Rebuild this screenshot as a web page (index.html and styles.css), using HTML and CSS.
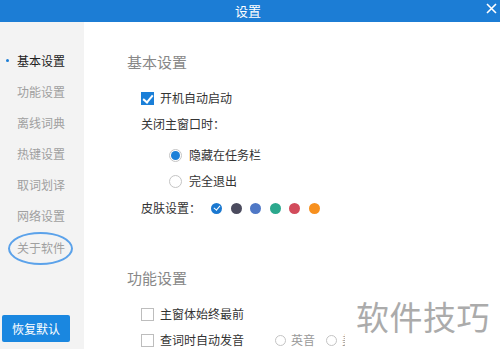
FILE: index.html
```html
<!DOCTYPE html>
<html lang="zh-CN">
<head>
    <meta charset="UTF-8">
    <title>设置</title>
    <link rel="stylesheet" href="styles.css">
</head>
<body>
    <header class="titlebar">
        <span class="title">设置</span>
        <svg class="close" width="11" height="11" viewBox="0 0 11 11">
            <path d="M1 1 L10 10 M10 1 L1 10" stroke="#fff" stroke-width="1.6" fill="none"/>
        </svg>
    </header>

    <div class="main">
        <!-- Left navigation -->
        <aside class="sidebar">
            <ul class="nav">
                <li class="active">基本设置</li>
                <li>功能设置</li>
                <li>离线词典</li>
                <li>热键设置</li>
                <li>取词划译</li>
                <li>网络设置</li>
                <li class="circled">关于软件</li>
            </ul>
            <button class="reset">恢复默认</button>
        </aside>

        <!-- Settings panel -->
        <section class="content">
            <h2 class="section-title">基本设置</h2>
            <div class="row"><span class="checkbox checked"></span>开机自动启动</div>
            <div class="row">关闭主窗口时：</div>
            <div class="group">
                <div class="row"><span class="radio checked"></span>隐藏在任务栏</div>
                <div class="row"><span class="radio"></span>完全退出</div>
            </div>
            <div class="row">
                皮肤设置：
                <span class="skins">
                    <span class="skin selected" style="background:#1a78d0"></span>
                    <span class="skin" style="background:#4b4b5e"></span>
                    <span class="skin" style="background:#4f78c6"></span>
                    <span class="skin" style="background:#2ba88d"></span>
                    <span class="skin" style="background:#d24b5b"></span>
                    <span class="skin" style="background:#f7901e"></span>
                </span>
            </div>

            <h2 class="section-title second">功能设置</h2>
            <div class="row"><span class="checkbox"></span>主窗体始终最前</div>
            <div class="row">
                <span class="checkbox"></span>查词时自动发音
                <span class="options">
                    <span class="option"><span class="radio small"></span>英音</span>
                    <span class="option"><span class="radio small"></span>美音</span>
                </span>
            </div>
        </section>
    </div>

    <div class="watermark">软件技巧</div>
</body>
</html>
```

FILE: styles.css
```css
/* Settings dialog */
body {
    margin: 0;
    width: 500px;
    height: 349px;
    overflow: hidden;
    font-family: "Noto Sans CJK SC", "Noto Sans", sans-serif;
    font-size: 12px;
    color: #333;
    background: #fff;
    position: relative;
}

.titlebar {
    height: 22px;
    background: #1c7dd5;
    display: flex;
    align-items: center;
    justify-content: center;
    position: relative;
}

.title {
    color: #fff;
    font-size: 13px;
    line-height: 22px;
    margin-left: -4px;
}

.close {
    position: absolute;
    right: 3px;
    top: 3px;
}

.main {
    display: flex;
    height: 327px;
}

.sidebar {
    width: 84px;
    background: #f3f3f3;
    display: flex;
    flex-direction: column;
    padding: 23px 0 7px;
    box-sizing: border-box;
}

.nav {
    list-style: none;
    margin: 0;
    padding: 0;
}

.nav li {
    position: relative;
    line-height: 31px;
    height: 31px;
    padding-left: 17px;
    color: #a0a0a0;
}

.nav li:last-child {
    margin-top: 1px;
}

.nav li.active {
    color: #222;
}

.nav li.active::before {
    content: "";
    position: absolute;
    left: 6px;
    top: 14px;
    width: 3px;
    height: 3px;
    border-radius: 50%;
    background: #1c7dd5;
}

.nav li.circled::after {
    content: "";
    position: absolute;
    left: 8px;
    top: 0;
    width: 65px;
    height: 33px;
    box-sizing: border-box;
    border: 2px solid #5ba2ea;
    border-radius: 50%;
}

.reset {
    margin-top: auto;
    margin-left: 2px;
    width: 68px;
    height: 27px;
    border: none;
    border-radius: 2px;
    background: #1a87e0;
    color: #fff;
    font-family: inherit;
    font-size: 12px;
    padding: 0;
}

.content {
    flex: 1;
    padding: 30px 0 0 43px;
}

.section-title {
    margin: 0;
    font-size: 15px;
    font-weight: normal;
    line-height: 20px;
    color: #888;
}

.section-title + .row {
    margin-top: 13px;
}

.section-title.second {
    margin-top: 47px;
}

.section-title.second + .row {
    margin-top: 13px;
}

.row {
    display: flex;
    align-items: center;
    height: 26px;
    line-height: 26px;
    padding-left: 14px;
}

.group {
    padding: 5px 0 1px 28px;
}

.checkbox {
    width: 13px;
    height: 13px;
    box-sizing: border-box;
    border: 1px solid #bdbdbd;
    margin-right: 6px;
    position: relative;
}

.checkbox.checked {
    background: #1a7fd8;
    border-color: #1a7fd8;
}

.checkbox.checked::after {
    content: "";
    position: absolute;
    left: 3px;
    top: 0px;
    width: 4px;
    height: 8px;
    border: solid #fff;
    border-width: 0 2px 2px 0;
    transform: rotate(40deg);
}

.radio {
    width: 13px;
    height: 13px;
    box-sizing: border-box;
    border: 1px solid #c4c4c4;
    border-radius: 50%;
    margin-right: 7px;
    position: relative;
}

.radio.checked::after {
    content: "";
    position: absolute;
    left: 1px;
    top: 1px;
    width: 9px;
    height: 9px;
    border-radius: 50%;
    background: #1a7fd8;
}

.radio.small {
    width: 11px;
    height: 11px;
    margin-right: 5px;
}

.options {
    display: flex;
    margin-left: 31px;
}

.option {
    display: flex;
    align-items: center;
    color: #999;
    margin-right: 11px;
}

.skins {
    display: flex;
    margin-left: 10px;
}

.skin {
    width: 11px;
    height: 11px;
    border-radius: 50%;
    margin-right: 8.5px;
    position: relative;
}

.skin.selected::after {
    content: "";
    position: absolute;
    left: 3.5px;
    top: 1.5px;
    width: 2.5px;
    height: 5px;
    border: solid #fff;
    border-width: 0 1.5px 1.5px 0;
    transform: rotate(40deg);
}

.watermark {
    position: absolute;
    left: 345px;
    top: 288px;
    right: 0;
    bottom: 0;
    background: #fff;
    padding: 6px 0 0 11px;
    font-size: 33px;
    line-height: 44px;
    color: #ababab;
    letter-spacing: 0.5px;
}
```
